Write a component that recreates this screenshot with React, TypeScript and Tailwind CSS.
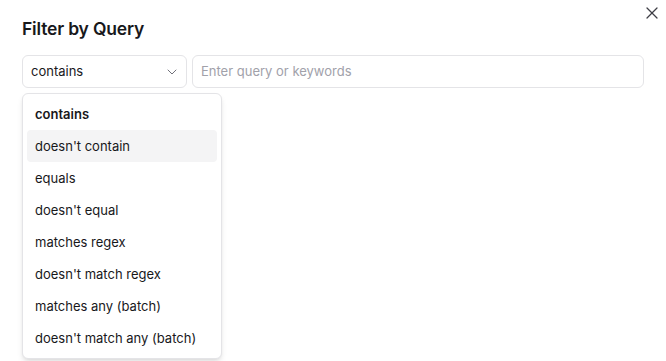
import { ChevronDown, X } from 'lucide-react';

const options = [
  'contains',
  "doesn't contain",
  'equals',
  "doesn't equal",
  'matches regex',
  "doesn't match regex",
  'matches any (batch)',
  "doesn't match any (batch)",
];

export default function App() {
  const selected = 'contains';
  const hovered = "doesn't contain";

  return (
    <div
      className="relative w-[666px] h-[361px] overflow-hidden bg-white text-[#18181b]"
      style={{ fontFamily: 'Inter, "Liberation Sans", sans-serif' }}
    >
      <button className="absolute right-[4px] top-[3px] p-0 text-[#3f3f46]" aria-label="Close">
        <X size={20} strokeWidth={1.5} />
      </button>

      <div className="px-[22px] pt-[15px]">
        <h2 className="text-[17.5px] leading-7 font-semibold tracking-[-0.01em]">Filter by Query</h2>

        <div className="relative mt-[12px] flex gap-[5px]">
          <div className="w-[165px] h-[33px] shrink-0 flex items-center justify-between pl-[8px] pr-[6px] border border-[#e4e4e7] rounded-[6px] text-[13px] pt-px">
            <span>{selected}</span>
            <ChevronDown size={16} strokeWidth={1.5} className="text-[#71717a]" />
          </div>
          <div className="flex-1 h-[33px] flex items-center px-[8px] border border-[#e4e4e7] rounded-[6px] text-[13px] text-[#a1a1aa] pt-px">
            Enter query or keywords
          </div>

          {/* Open select menu */}
          <div className="absolute left-0 top-[38px] w-[200px] rounded-[6px] border border-[#e4e4e7] bg-white p-[4px] shadow-md">
            {options.map((opt) => (
              <div
                key={opt}
                className={`h-[32px] flex items-center px-[8px] pt-px rounded-[4px] text-[13px] ${
                  opt === selected ? 'font-semibold' : ''
                } ${opt === hovered ? 'bg-[#f4f4f5]' : ''}`}
              >
                {opt}
              </div>
            ))}
          </div>
        </div>
      </div>
    </div>
  );
}
